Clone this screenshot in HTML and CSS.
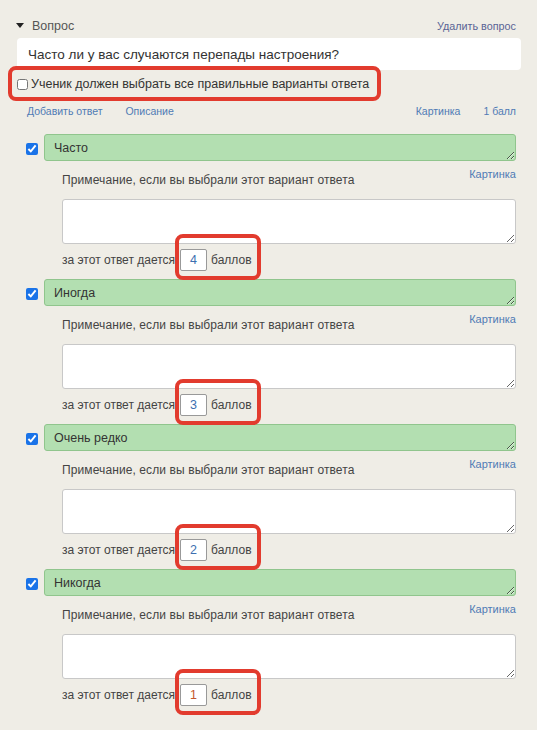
FILE: index.html
```html
<!DOCTYPE html>
<html>
	<head>
		<meta charset="UTF-8">
		<title>Вопрос</title>
		<link rel="stylesheet" href="styles.css">
	</head>
	<body>
		<div class="question">
			<div class="q-head">
				<span class="q-title"><span class="tri"></span>Вопрос</span>
				<a href="#" class="del">Удалить вопрос</a>
			</div>
			<input type="text" class="q-text" value="Часто ли у вас случаются перепады настроения?">
			<label class="all-right">
				<input type="checkbox">Ученик должен выбрать все правильные варианты ответа
				<span class="mark mark-wide"></span>
			</label>
			<div class="links">
				<div class="links-left">
					<a href="#">Добавить ответ</a>
					<a href="#">Описание</a>
				</div>
				<div class="links-right">
					<a href="#">Картинка</a>
					<a href="#">1 балл</a>
				</div>
			</div>

			<div class="answer">
				<div class="a-row">
					<input type="checkbox" checked>
					<textarea class="a-text">Часто</textarea>
				</div>
				<div class="note-row">
					<span>Примечание, если вы выбрали этот вариант ответа</span>
					<a href="#">Картинка</a>
				</div>
				<textarea class="note"></textarea>
				<div class="score">
					за этот ответ дается
					<span class="pts"><input type="text" value="4"> баллов<span class="mark"></span></span>
				</div>
			</div>

			<div class="answer">
				<div class="a-row">
					<input type="checkbox" checked>
					<textarea class="a-text">Иногда</textarea>
				</div>
				<div class="note-row">
					<span>Примечание, если вы выбрали этот вариант ответа</span>
					<a href="#">Картинка</a>
				</div>
				<textarea class="note"></textarea>
				<div class="score">
					за этот ответ дается
					<span class="pts"><input type="text" value="3"> баллов<span class="mark"></span></span>
				</div>
			</div>

			<div class="answer">
				<div class="a-row">
					<input type="checkbox" checked>
					<textarea class="a-text">Очень редко</textarea>
				</div>
				<div class="note-row">
					<span>Примечание, если вы выбрали этот вариант ответа</span>
					<a href="#">Картинка</a>
				</div>
				<textarea class="note"></textarea>
				<div class="score">
					за этот ответ дается
					<span class="pts"><input type="text" value="2"> баллов<span class="mark"></span></span>
				</div>
			</div>

			<div class="answer">
				<div class="a-row">
					<input type="checkbox" checked>
					<textarea class="a-text">Никогда</textarea>
				</div>
				<div class="note-row">
					<span>Примечание, если вы выбрали этот вариант ответа</span>
					<a href="#">Картинка</a>
				</div>
				<textarea class="note"></textarea>
				<div class="score">
					за этот ответ дается
					<span class="pts"><input type="text" value="1" class="low"> баллов<span class="mark"></span></span>
				</div>
			</div>
		</div>
	</body>
</html>
```

FILE: styles.css
```css
*{
	margin: 0;
	padding: 0;
	box-sizing: border-box;
}
body{
	background: #efede6;
	font-family: "Liberation Sans", Arial, sans-serif;
	color: #333;
}
a{
	color: #4f7bb5;
	text-decoration: none;
}

.question{
	padding: 18px 21px 30px 17px;
}
.q-head{
	display: flex;
	justify-content: space-between;
	align-items: center;
	height: 15px;
}
.q-title{
	font-size: 12.5px;
	color: #555;
	display: flex;
	align-items: center;
}
.tri{
	width: 0;
	height: 0;
	border-left: 4px solid transparent;
	border-right: 4px solid transparent;
	border-top: 5px solid #222;
	margin-right: 8px;
	margin-left: -1px;
}
.del{
	font-size: 10.8px;
	color: #5a6495;
}

.q-text{
	display: block;
	width: 504px;
	height: 32px;
	margin-top: 5px;
	border: 0;
	border-radius: 4px;
	background: #fff;
	padding: 0 11px;
	font: 13.5px "Liberation Sans", Arial, sans-serif;
	color: #333;
	outline: none;
}

.all-right{
	position: relative;
	display: flex;
	align-items: center;
	height: 28px;
	font-size: 12.5px;
	color: #333;
}
.all-right input{
	width: 11px;
	height: 11px;
	margin: 0 3px 0 0;
}

.mark{
	position: absolute;
	border: 4px solid #e23b2e;
	border-radius: 8px;
	pointer-events: none;
}
.mark-wide{
	left: -9px;
	top: -4px;
	width: 373px;
	height: 35px;
}

.links{
	display: flex;
	justify-content: space-between;
	font-size: 10.5px;
	height: 16px;
	margin-top: 7px;
	padding-left: 10px;
	padding-right: 0;
}
.links-left a{margin-right: 20px;}
.links-right a{margin-left: 20px;}

.answer{
	padding-left: 9px;
}
.a-row{
	display: flex;
	align-items: center;
	margin-top: 8px;
}
.links + .answer .a-row{margin-top: 13px;}
.a-row input{
	width: 12px;
	height: 12px;
	margin: 2px 6px 0 0;
	accent-color: #1a73e8;
}
.a-text{
	width: 472px;
	height: 27px;
	background: #b3dfb1;
	border: 1px solid #90c58d;
	border-radius: 3px;
	padding: 6px 9px;
	font: 12.5px "Liberation Sans", Arial, sans-serif;
	color: #333;
	resize: vertical;
	overflow: hidden;
	outline: none;
}

.note-row{
	display: flex;
	justify-content: space-between;
	align-items: flex-start;
	padding-left: 36px;
	margin-top: 7px;
	height: 31px;
	font-size: 12px;
	letter-spacing: 0.1px;
	color: #444;
}
.note-row span{
	padding-top: 5px;
}
.note-row a{
	font-size: 11px;
	letter-spacing: 0;
	color: #4f7bb5;
}

.note{
	display: block;
	margin-left: 36px;
	width: 454px;
	height: 45px;
	border: 1px solid #c8c8c8;
	border-radius: 3px;
	background: #fff;
	resize: vertical;
	outline: none;
}

.score{
	display: flex;
	align-items: center;
	margin-left: 36px;
	margin-top: 5px;
	font-size: 12px;
	color: #444;
	height: 22px;
}
.pts{
	position: relative;
	display: flex;
	align-items: center;
	margin-left: 5px;
}
.pts input{
	width: 27px;
	height: 22px;
	border: 1px solid #999;
	border-radius: 2px;
	background: #fff;
	text-align: center;
	font: 12.5px "Liberation Sans", Arial, sans-serif;
	color: #3d6fb0;
	margin-right: 4px;
	outline: none;
}
.pts input.low{color: #c4572d;}
.pts .mark{
	left: -5px;
	top: -15px;
	width: 86px;
	height: 46px;
}
```
